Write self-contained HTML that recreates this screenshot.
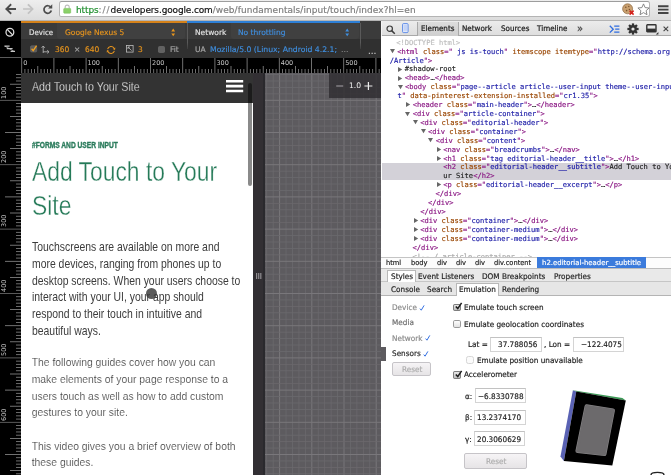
<!DOCTYPE html><html lang="en"><head><meta charset="utf-8"><title>Add Touch to Your Site - DevTools device mode</title><style>
*{margin:0;padding:0;box-sizing:border-box}
html,body{width:671px;height:475px;overflow:hidden;background:#fff}
body{font-family:"DejaVu Sans","Liberation Sans",sans-serif;font-size:7.2px;color:#222;-webkit-font-smoothing:antialiased}
#root{will-change:transform;position:relative;width:671px;height:475px;overflow:hidden;background:#fff}
.abs{position:absolute}
.t{position:absolute;white-space:nowrap;line-height:1;transform-origin:0 50%}
svg{position:absolute;overflow:visible}
/* browser chrome */
#bar{left:0;top:0;width:671px;height:21px;background:linear-gradient(#eeeeee,#dcdcdc);border-bottom:1px solid #b4b4b4}
#omni{left:58.5px;top:1px;width:591.5px;height:16.2px;background:#fff;border:1px solid #b4b4b4;border-top-color:#9d9d9d;border-radius:2.5px}
.url{font-size:8.96px;top:5.9px;-webkit-text-stroke:0.18px currentColor}
/* device mode */
#leftcol{left:0;top:21px;width:21px;height:454px;background:#000}
#dtb{left:21px;top:21px;width:360px;height:37px;background:#303030}
#dtb1{left:0;top:0;width:360px;height:18px;background:#3b3b3b}
#hr{left:21px;top:58px;width:360px;height:15px;background:#000}
.dl{font-size:7.68px;color:#e4e4e4;-webkit-text-stroke:0.15px currentColor;transform:scaleX(.98)}
.or{color:#e8951d}
.bl{color:#3f8fe0}
.gy{color:#a8a8a8}
/* device screen */
#screen{left:21px;top:73px;width:231.5px;height:402px;background:#fff;overflow:hidden}
#phdr{left:0;top:0;width:232px;height:30px;background:#333}
.rc{font-family:"Liberation Sans",sans-serif}
.pg{font-family:"Liberation Sans",sans-serif;color:#3c3c3c;font-size:10.37px;-webkit-text-stroke:0.16px #fff}
#resz{left:252.5px;top:73px;width:12.3px;height:402px;background:linear-gradient(90deg,#322f33 0,#322f33 9.7px,#2a292d 9.9px)}
#grid{left:264.7px;top:73px;width:116.3px;height:402px;background:#5d5b5f;overflow:hidden}
/* devtools */
#dt{left:381px;top:21px;width:290px;height:454px;background:#fff}
#dttb{left:0;top:0;width:290px;height:15px;background:linear-gradient(#ececec,#dedede);border-bottom:1px solid #a9a9a9}
.tab{font-size:7.68px;color:#1a1a1a;-webkit-text-stroke:0.22px currentColor;top:3.5px;transform:scaleX(.935)}
.mono{font-family:"DejaVu Sans Mono","Liberation Mono",monospace;font-size:7.08px;letter-spacing:0;-webkit-text-stroke:0.15px currentColor}
.ln{position:absolute;white-space:pre;line-height:8.91px;height:8.91px}
.tg{color:#881280}.an{color:#994500}.av{color:#1a1aa6}.tx{color:#222}.cm{color:#bdbdbd}
.ui{font-size:7.68px;color:#222;-webkit-text-stroke:0.18px currentColor;transform:scaleX(.95)}
.inp{position:absolute;background:#fff;border:1px solid #d4d4d4;border-top-color:#c2c2c2;height:15px}
.btn{position:absolute;background:linear-gradient(#f6f4f6,#e6e4e6);border:1px solid #c6c4c8;border-radius:2px;height:14.6px}
.cb{position:absolute;width:7.8px;height:7.8px;border:0.9px solid #9a9a9a;border-radius:1.8px;background:linear-gradient(#fdfdfd,#e2e2e2)}
</style></head><body><div id="root">
<div id="bar" class="abs">
<svg style="left:5.2px;top:4.2px" width="11" height="10" viewBox="0 0 12 11"><path d="M6 1 L1.5 5.5 L6 10 M1.8 5.5 H11" fill="none" stroke="#4c4c4c" stroke-width="2.1" stroke-linecap="square" stroke-linejoin="miter"/></svg>
<svg style="left:23.2px;top:4.2px" width="11" height="10" viewBox="0 0 12 11"><path d="M6 1 L10.5 5.5 L6 10 M10.2 5.5 H1" fill="none" stroke="#c2c2c2" stroke-width="1.9" stroke-linecap="square" stroke-linejoin="miter"/></svg>
<svg style="left:41.6px;top:3.6px" width="11" height="11" viewBox="0 0 12 12"><path d="M9.6 3.6 A4.1 4.1 0 1 0 10.2 7.2" fill="none" stroke="#4c4c4c" stroke-width="1.9"/><path d="M6.6 4.8 L11.2 4.8 L11.2 0.2 Z" fill="#4c4c4c"/></svg>
<div id="omni" class="abs"></div>
<svg style="left:63.2px;top:4.3px" width="9" height="10" viewBox="0 0 9 10"><path d="M2.2 4.6 V3.1 A2 2 0 0 1 6.2 3.1 V4.6" fill="none" stroke="#bcbcbc" stroke-width="1.1"/><rect x="0.7" y="4.4" width="7" height="4.8" rx="0.7" fill="#8ad068" stroke="#6cb84c" stroke-width="0.5"/></svg>
<span class="t url" style="left:76px"><span style="color:#1f8f2e;letter-spacing:-0.1px">https</span><span style="color:#8a8a8a;letter-spacing:1px">://</span><span style="color:#111;letter-spacing:-0.12px">developers.google.com</span><span style="color:#7c7c7c;letter-spacing:0.08px">/web/fundamentals/input/touch/index?hl=en</span></span>
<svg style="left:621.5px;top:2.5px" width="13" height="13" viewBox="0 0 13 13"><circle cx="5.6" cy="5.8" r="5" fill="#c9a070" stroke="#8d6a43" stroke-width="0.7"/><circle cx="3.8" cy="4.3" r="0.8" fill="#7a5530"/><circle cx="6.8" cy="3.5" r="0.7" fill="#7a5530"/><circle cx="4.6" cy="7.6" r="0.8" fill="#7a5530"/><circle cx="7.4" cy="6.4" r="0.7" fill="#7a5530"/><path d="M7.6 7.6 L11.6 11.6 M11.6 7.6 L7.6 11.6" stroke="#d4201b" stroke-width="1.5"/></svg>
<svg style="left:636.5px;top:2.5px" width="13" height="13" viewBox="0 0 13 13"><path d="M6.5 0.9 L8.1 4.6 L12.1 5 L9.1 7.7 L10 11.7 L6.5 9.6 L3 11.7 L3.9 7.7 L0.9 5 L4.9 4.6 Z" fill="#fff" stroke="#7c7c7c" stroke-width="0.9" stroke-linejoin="round"/></svg>
<svg style="left:657.5px;top:4.5px" width="11" height="10" viewBox="0 0 11 10"><path d="M0 1.2 H10.5 M0 4.6 H10.5 M0 8 H10.5" stroke="#444" stroke-width="1.9"/></svg>
</div>
<div id="leftcol" class="abs">
<svg style="left:0;top:0" width="21" height="40" viewBox="0 0 21 40"><circle cx="9.9" cy="11.2" r="3.9" fill="none" stroke="#e0e0e0" stroke-width="1.25"/><path d="M7.2 8.4 L12.7 14" stroke="#e0e0e0" stroke-width="1.25"/><path d="M4.4 25.2 H9.6 M6.8 27.7 H12.6 M10.6 30.4 H15" stroke="#c8c8c8" stroke-width="1.3"/><path d="M5 25.2 L14 30.4" stroke="#c8c8c8" stroke-width="0.7"/></svg>
<svg style="left:0;top:0" width="21" height="454" viewBox="0 0 21 454"><rect x="16" y="53.14" width="5" height="0.8" fill="#888"/><rect x="16" y="56.36" width="5" height="0.8" fill="#888"/><rect x="16" y="59.58" width="5" height="0.8" fill="#888"/><rect x="10" y="62.80" width="11" height="0.8" fill="#8e8e8e"/><rect x="16" y="66.02" width="5" height="0.8" fill="#888"/><rect x="16" y="69.24" width="5" height="0.8" fill="#888"/><rect x="16" y="72.46" width="5" height="0.8" fill="#888"/><rect x="16" y="75.68" width="5" height="0.8" fill="#888"/><rect x="0" y="78.90" width="21" height="0.8" fill="#707070"/><rect x="16" y="82.12" width="5" height="0.8" fill="#888"/><rect x="16" y="85.34" width="5" height="0.8" fill="#888"/><rect x="16" y="88.56" width="5" height="0.8" fill="#888"/><rect x="16" y="91.78" width="5" height="0.8" fill="#888"/><rect x="10" y="95.00" width="11" height="0.8" fill="#8e8e8e"/><rect x="16" y="98.22" width="5" height="0.8" fill="#888"/><rect x="16" y="101.44" width="5" height="0.8" fill="#888"/><rect x="16" y="104.66" width="5" height="0.8" fill="#888"/><rect x="16" y="107.88" width="5" height="0.8" fill="#888"/><rect x="5" y="111.10" width="16" height="0.8" fill="#8e8e8e"/><rect x="16" y="114.32" width="5" height="0.8" fill="#888"/><rect x="16" y="117.54" width="5" height="0.8" fill="#888"/><rect x="16" y="120.76" width="5" height="0.8" fill="#888"/><rect x="16" y="123.98" width="5" height="0.8" fill="#888"/><rect x="10" y="127.20" width="11" height="0.8" fill="#8e8e8e"/><rect x="16" y="130.42" width="5" height="0.8" fill="#888"/><rect x="16" y="133.64" width="5" height="0.8" fill="#888"/><rect x="16" y="136.86" width="5" height="0.8" fill="#888"/><rect x="16" y="140.08" width="5" height="0.8" fill="#888"/><rect x="0" y="143.30" width="21" height="0.8" fill="#707070"/><rect x="16" y="146.52" width="5" height="0.8" fill="#888"/><rect x="16" y="149.74" width="5" height="0.8" fill="#888"/><rect x="16" y="152.96" width="5" height="0.8" fill="#888"/><rect x="16" y="156.18" width="5" height="0.8" fill="#888"/><rect x="10" y="159.40" width="11" height="0.8" fill="#8e8e8e"/><rect x="16" y="162.62" width="5" height="0.8" fill="#888"/><rect x="16" y="165.84" width="5" height="0.8" fill="#888"/><rect x="16" y="169.06" width="5" height="0.8" fill="#888"/><rect x="16" y="172.28" width="5" height="0.8" fill="#888"/><rect x="5" y="175.50" width="16" height="0.8" fill="#8e8e8e"/><rect x="16" y="178.72" width="5" height="0.8" fill="#888"/><rect x="16" y="181.94" width="5" height="0.8" fill="#888"/><rect x="16" y="185.16" width="5" height="0.8" fill="#888"/><rect x="16" y="188.38" width="5" height="0.8" fill="#888"/><rect x="10" y="191.60" width="11" height="0.8" fill="#8e8e8e"/><rect x="16" y="194.82" width="5" height="0.8" fill="#888"/><rect x="16" y="198.04" width="5" height="0.8" fill="#888"/><rect x="16" y="201.26" width="5" height="0.8" fill="#888"/><rect x="16" y="204.48" width="5" height="0.8" fill="#888"/><rect x="0" y="207.70" width="21" height="0.8" fill="#707070"/><rect x="16" y="210.92" width="5" height="0.8" fill="#888"/><rect x="16" y="214.14" width="5" height="0.8" fill="#888"/><rect x="16" y="217.36" width="5" height="0.8" fill="#888"/><rect x="16" y="220.58" width="5" height="0.8" fill="#888"/><rect x="10" y="223.80" width="11" height="0.8" fill="#8e8e8e"/><rect x="16" y="227.02" width="5" height="0.8" fill="#888"/><rect x="16" y="230.24" width="5" height="0.8" fill="#888"/><rect x="16" y="233.46" width="5" height="0.8" fill="#888"/><rect x="16" y="236.68" width="5" height="0.8" fill="#888"/><rect x="5" y="239.90" width="16" height="0.8" fill="#8e8e8e"/><rect x="16" y="243.12" width="5" height="0.8" fill="#888"/><rect x="16" y="246.34" width="5" height="0.8" fill="#888"/><rect x="16" y="249.56" width="5" height="0.8" fill="#888"/><rect x="16" y="252.78" width="5" height="0.8" fill="#888"/><rect x="10" y="256.00" width="11" height="0.8" fill="#8e8e8e"/><rect x="16" y="259.22" width="5" height="0.8" fill="#888"/><rect x="16" y="262.44" width="5" height="0.8" fill="#888"/><rect x="16" y="265.66" width="5" height="0.8" fill="#888"/><rect x="16" y="268.88" width="5" height="0.8" fill="#888"/><rect x="0" y="272.10" width="21" height="0.8" fill="#707070"/><rect x="16" y="275.32" width="5" height="0.8" fill="#888"/><rect x="16" y="278.54" width="5" height="0.8" fill="#888"/><rect x="16" y="281.76" width="5" height="0.8" fill="#888"/><rect x="16" y="284.98" width="5" height="0.8" fill="#888"/><rect x="10" y="288.20" width="11" height="0.8" fill="#8e8e8e"/><rect x="16" y="291.42" width="5" height="0.8" fill="#888"/><rect x="16" y="294.64" width="5" height="0.8" fill="#888"/><rect x="16" y="297.86" width="5" height="0.8" fill="#888"/><rect x="16" y="301.08" width="5" height="0.8" fill="#888"/><rect x="5" y="304.30" width="16" height="0.8" fill="#8e8e8e"/><rect x="16" y="307.52" width="5" height="0.8" fill="#888"/><rect x="16" y="310.74" width="5" height="0.8" fill="#888"/><rect x="16" y="313.96" width="5" height="0.8" fill="#888"/><rect x="16" y="317.18" width="5" height="0.8" fill="#888"/><rect x="10" y="320.40" width="11" height="0.8" fill="#8e8e8e"/><rect x="16" y="323.62" width="5" height="0.8" fill="#888"/><rect x="16" y="326.84" width="5" height="0.8" fill="#888"/><rect x="16" y="330.06" width="5" height="0.8" fill="#888"/><rect x="16" y="333.28" width="5" height="0.8" fill="#888"/><rect x="0" y="336.50" width="21" height="0.8" fill="#707070"/><rect x="16" y="339.72" width="5" height="0.8" fill="#888"/><rect x="16" y="342.94" width="5" height="0.8" fill="#888"/><rect x="16" y="346.16" width="5" height="0.8" fill="#888"/><rect x="16" y="349.38" width="5" height="0.8" fill="#888"/><rect x="10" y="352.60" width="11" height="0.8" fill="#8e8e8e"/><rect x="16" y="355.82" width="5" height="0.8" fill="#888"/><rect x="16" y="359.04" width="5" height="0.8" fill="#888"/><rect x="16" y="362.26" width="5" height="0.8" fill="#888"/><rect x="16" y="365.48" width="5" height="0.8" fill="#888"/><rect x="5" y="368.70" width="16" height="0.8" fill="#8e8e8e"/><rect x="16" y="371.92" width="5" height="0.8" fill="#888"/><rect x="16" y="375.14" width="5" height="0.8" fill="#888"/><rect x="16" y="378.36" width="5" height="0.8" fill="#888"/><rect x="16" y="381.58" width="5" height="0.8" fill="#888"/><rect x="10" y="384.80" width="11" height="0.8" fill="#8e8e8e"/><rect x="16" y="388.02" width="5" height="0.8" fill="#888"/><rect x="16" y="391.24" width="5" height="0.8" fill="#888"/><rect x="16" y="394.46" width="5" height="0.8" fill="#888"/><rect x="16" y="397.68" width="5" height="0.8" fill="#888"/><rect x="0" y="400.90" width="21" height="0.8" fill="#707070"/><rect x="16" y="404.12" width="5" height="0.8" fill="#888"/><rect x="16" y="407.34" width="5" height="0.8" fill="#888"/><rect x="16" y="410.56" width="5" height="0.8" fill="#888"/><rect x="16" y="413.78" width="5" height="0.8" fill="#888"/><rect x="10" y="417.00" width="11" height="0.8" fill="#8e8e8e"/><rect x="16" y="420.22" width="5" height="0.8" fill="#888"/><rect x="16" y="423.44" width="5" height="0.8" fill="#888"/><rect x="16" y="426.66" width="5" height="0.8" fill="#888"/><rect x="16" y="429.88" width="5" height="0.8" fill="#888"/><rect x="5" y="433.10" width="16" height="0.8" fill="#8e8e8e"/><rect x="16" y="436.32" width="5" height="0.8" fill="#888"/><rect x="16" y="439.54" width="5" height="0.8" fill="#888"/><rect x="16" y="442.76" width="5" height="0.8" fill="#888"/><rect x="16" y="445.98" width="5" height="0.8" fill="#888"/><rect x="10" y="449.20" width="11" height="0.8" fill="#8e8e8e"/><rect x="16" y="452.42" width="5" height="0.8" fill="#888"/></svg>
<div class="abs" style="left:0;top:36.2px;width:21px;height:0.9px;background:#5a5a5a"></div>
<span class="t" style="left:1.2px;top:77.6px;font-size:6.5px;color:#c6c6c6;transform-origin:0 0;transform:rotate(-90deg) translate(0,0)">100</span>
<span class="t" style="left:1.2px;top:142.0px;font-size:6.5px;color:#c6c6c6;transform-origin:0 0;transform:rotate(-90deg) translate(0,0)">200</span>
<span class="t" style="left:1.2px;top:206.4px;font-size:6.5px;color:#c6c6c6;transform-origin:0 0;transform:rotate(-90deg) translate(0,0)">300</span>
<span class="t" style="left:1.2px;top:270.8px;font-size:6.5px;color:#c6c6c6;transform-origin:0 0;transform:rotate(-90deg) translate(0,0)">400</span>
<span class="t" style="left:1.2px;top:335.2px;font-size:6.5px;color:#c6c6c6;transform-origin:0 0;transform:rotate(-90deg) translate(0,0)">500</span>
<span class="t" style="left:1.2px;top:399.6px;font-size:6.5px;color:#c6c6c6;transform-origin:0 0;transform:rotate(-90deg) translate(0,0)">600</span>
</div>
<div id="dtb" class="abs"><div id="dtb1" class="abs"></div>
<div class="abs" style="left:0;top:0;width:165.5px;height:2px;background:#d5821a"></div>
<div class="abs" style="left:165.5px;top:0;width:173.5px;height:2px;background:#2d7fd6"></div>
<div class="abs" style="left:36px;top:2px;width:128px;height:15.5px;background:#404040;border-radius:0 0 3px 3px"></div>
<div class="abs" style="left:210px;top:2px;width:127.5px;height:15.5px;background:#404040;border-radius:0 0 3px 3px"></div>
<div class="abs" style="left:165.7px;top:2px;width:1px;height:25.5px;background:linear-gradient(#5a5a5a 75%,#3c3c3c)"></div>
<div class="abs" style="left:339.2px;top:2px;width:1px;height:25.5px;background:linear-gradient(#5a5a5a 75%,#3c3c3c)"></div>
<span class="t dl" style="left:7.7px;top:8.1px;transform:scaleX(.92)">Device</span>
<span class="t dl or" style="left:43.7px;top:8.1px">Google Nexus 5</span>
<svg style="left:150px;top:6.5px" width="5" height="9" viewBox="0 0 5 9"><path d="M0.3 3.4 L2.2 0.6 L4.1 3.4 Z M0.3 5.4 L2.2 8.2 L4.1 5.4 Z" fill="#e8951d"/></svg>
<span class="t dl" style="left:173.8px;top:8.1px">Network</span>
<span class="t dl bl" style="left:216.9px;top:8.1px">No throttling</span>
<svg style="left:323.5px;top:6.5px" width="5" height="9" viewBox="0 0 5 9"><path d="M0.3 3.4 L2.2 0.6 L4.1 3.4 Z M0.3 5.4 L2.2 8.2 L4.1 5.4 Z" fill="#3f8fe0"/></svg>
<svg style="left:9px;top:24px" width="8" height="8" viewBox="0 0 8 8"><rect x="0.5" y="0.8" width="6.2" height="6.2" rx="1.2" fill="#5a5a5a" stroke="#777" stroke-width="0.5"/><path d="M1.6 3.8 L3.2 5.6 L6.6 0.6" fill="none" stroke="#f0a020" stroke-width="1.3"/></svg>
<svg style="left:20px;top:23.5px" width="9" height="9" viewBox="0 0 9 9"><path d="M2.2 8 V1.2 M0.6 2.8 L2.2 1 L3.8 2.8 M2.2 6.8 H7.8 M6.2 5.2 L8 6.8 L6.2 8.4" fill="none" stroke="#bdbdbd" stroke-width="0.8"/></svg>
<span class="t dl or" style="left:33.7px;top:25.2px">360</span>
<span class="t dl gy" style="left:53.2px;top:25.2px">×</span>
<span class="t dl or" style="left:63.8px;top:25.2px">640</span>
<svg style="left:84.6px;top:23.6px" width="10" height="10" viewBox="0 0 10 10"><path d="M1.62 4.09 A3.5 3.5 0 0 1 8.03 3.25 M8.38 5.91 A3.5 3.5 0 0 1 1.97 6.75" fill="none" stroke="#e8951d" stroke-width="1.05"/><path d="M9.02 4.96 L9.33 2.50 L6.73 4.00 Z M0.98 5.04 L0.67 7.50 L3.27 6.00 Z" fill="#e8951d"/></svg>
<svg style="left:105px;top:24.2px" width="8" height="8" viewBox="0 0 8 8"><rect x="0.5" y="0.5" width="6.6" height="6.6" fill="none" stroke="#bcbcbc" stroke-width="0.8"/><path d="M2 2 L5.6 5.6 M2 2 H4 M2 2 V4" stroke="#bcbcbc" stroke-width="0.8" fill="none"/></svg>
<span class="t dl or" style="left:117.4px;top:25.2px">3</span>
<div class="abs" style="left:137.2px;top:24.8px;width:7px;height:7px;border-radius:1.8px;background:#626262"></div>
<span class="t dl gy" style="left:148.6px;top:25.2px">Fit</span>
<span class="t dl gy" style="left:173.8px;top:25.2px">UA</span>
<span class="t dl bl" style="left:189.2px;top:25.2px;transform:scaleX(1.004)">Mozilla/5.0 (Linux; Android 4.2.1;</span>
<span class="t dl" style="left:319.5px;top:25.2px;color:#8c8c8c">…</span>
<span class="t dl" style="left:346.6px;top:25.6px;color:#d0d0d0;font-size:8.5px;letter-spacing:0.3px">…</span>
</div>
<div id="hr" class="abs"><svg style="left:0;top:0" width="360" height="15" viewBox="0 0 360 15"><rect x="0.25" y="0" width="0.9" height="15" fill="#7c7c7c"/><rect x="3.52" y="11" width="0.8" height="4" fill="#8a8a8a"/><rect x="6.74" y="11" width="0.8" height="4" fill="#8a8a8a"/><rect x="9.96" y="11" width="0.8" height="4" fill="#8a8a8a"/><rect x="13.18" y="11" width="0.8" height="4" fill="#8a8a8a"/><rect x="16.40" y="8" width="0.8" height="7" fill="#8e8e8e"/><rect x="19.62" y="11" width="0.8" height="4" fill="#8a8a8a"/><rect x="22.84" y="11" width="0.8" height="4" fill="#8a8a8a"/><rect x="26.06" y="11" width="0.8" height="4" fill="#8a8a8a"/><rect x="29.28" y="11" width="0.8" height="4" fill="#8a8a8a"/><rect x="32.45" y="0" width="0.9" height="15" fill="#7c7c7c"/><rect x="35.72" y="11" width="0.8" height="4" fill="#8a8a8a"/><rect x="38.94" y="11" width="0.8" height="4" fill="#8a8a8a"/><rect x="42.16" y="11" width="0.8" height="4" fill="#8a8a8a"/><rect x="45.38" y="11" width="0.8" height="4" fill="#8a8a8a"/><rect x="48.60" y="8" width="0.8" height="7" fill="#8e8e8e"/><rect x="51.82" y="11" width="0.8" height="4" fill="#8a8a8a"/><rect x="55.04" y="11" width="0.8" height="4" fill="#8a8a8a"/><rect x="58.26" y="11" width="0.8" height="4" fill="#8a8a8a"/><rect x="61.48" y="11" width="0.8" height="4" fill="#8a8a8a"/><rect x="64.65" y="0" width="0.9" height="15" fill="#7c7c7c"/><rect x="67.92" y="11" width="0.8" height="4" fill="#8a8a8a"/><rect x="71.14" y="11" width="0.8" height="4" fill="#8a8a8a"/><rect x="74.36" y="11" width="0.8" height="4" fill="#8a8a8a"/><rect x="77.58" y="11" width="0.8" height="4" fill="#8a8a8a"/><rect x="80.80" y="8" width="0.8" height="7" fill="#8e8e8e"/><rect x="84.02" y="11" width="0.8" height="4" fill="#8a8a8a"/><rect x="87.24" y="11" width="0.8" height="4" fill="#8a8a8a"/><rect x="90.46" y="11" width="0.8" height="4" fill="#8a8a8a"/><rect x="93.68" y="11" width="0.8" height="4" fill="#8a8a8a"/><rect x="96.85" y="0" width="0.9" height="15" fill="#7c7c7c"/><rect x="100.12" y="11" width="0.8" height="4" fill="#8a8a8a"/><rect x="103.34" y="11" width="0.8" height="4" fill="#8a8a8a"/><rect x="106.56" y="11" width="0.8" height="4" fill="#8a8a8a"/><rect x="109.78" y="11" width="0.8" height="4" fill="#8a8a8a"/><rect x="113.00" y="8" width="0.8" height="7" fill="#8e8e8e"/><rect x="116.22" y="11" width="0.8" height="4" fill="#8a8a8a"/><rect x="119.44" y="11" width="0.8" height="4" fill="#8a8a8a"/><rect x="122.66" y="11" width="0.8" height="4" fill="#8a8a8a"/><rect x="125.88" y="11" width="0.8" height="4" fill="#8a8a8a"/><rect x="129.05" y="0" width="0.9" height="15" fill="#7c7c7c"/><rect x="132.32" y="11" width="0.8" height="4" fill="#8a8a8a"/><rect x="135.54" y="11" width="0.8" height="4" fill="#8a8a8a"/><rect x="138.76" y="11" width="0.8" height="4" fill="#8a8a8a"/><rect x="141.98" y="11" width="0.8" height="4" fill="#8a8a8a"/><rect x="145.20" y="8" width="0.8" height="7" fill="#8e8e8e"/><rect x="148.42" y="11" width="0.8" height="4" fill="#8a8a8a"/><rect x="151.64" y="11" width="0.8" height="4" fill="#8a8a8a"/><rect x="154.86" y="11" width="0.8" height="4" fill="#8a8a8a"/><rect x="158.08" y="11" width="0.8" height="4" fill="#8a8a8a"/><rect x="161.25" y="0" width="0.9" height="15" fill="#7c7c7c"/><rect x="164.52" y="11" width="0.8" height="4" fill="#8a8a8a"/><rect x="167.74" y="11" width="0.8" height="4" fill="#8a8a8a"/><rect x="170.96" y="11" width="0.8" height="4" fill="#8a8a8a"/><rect x="174.18" y="11" width="0.8" height="4" fill="#8a8a8a"/><rect x="177.40" y="8" width="0.8" height="7" fill="#8e8e8e"/><rect x="180.62" y="11" width="0.8" height="4" fill="#8a8a8a"/><rect x="183.84" y="11" width="0.8" height="4" fill="#8a8a8a"/><rect x="187.06" y="11" width="0.8" height="4" fill="#8a8a8a"/><rect x="190.28" y="11" width="0.8" height="4" fill="#8a8a8a"/><rect x="193.45" y="0" width="0.9" height="15" fill="#7c7c7c"/><rect x="196.72" y="11" width="0.8" height="4" fill="#8a8a8a"/><rect x="199.94" y="11" width="0.8" height="4" fill="#8a8a8a"/><rect x="203.16" y="11" width="0.8" height="4" fill="#8a8a8a"/><rect x="206.38" y="11" width="0.8" height="4" fill="#8a8a8a"/><rect x="209.60" y="8" width="0.8" height="7" fill="#8e8e8e"/><rect x="212.82" y="11" width="0.8" height="4" fill="#8a8a8a"/><rect x="216.04" y="11" width="0.8" height="4" fill="#8a8a8a"/><rect x="219.26" y="11" width="0.8" height="4" fill="#8a8a8a"/><rect x="222.48" y="11" width="0.8" height="4" fill="#8a8a8a"/><rect x="225.65" y="0" width="0.9" height="15" fill="#7c7c7c"/><rect x="228.92" y="11" width="0.8" height="4" fill="#8a8a8a"/><rect x="232.14" y="11" width="0.8" height="4" fill="#8a8a8a"/><rect x="235.36" y="11" width="0.8" height="4" fill="#8a8a8a"/><rect x="238.58" y="11" width="0.8" height="4" fill="#8a8a8a"/><rect x="241.80" y="8" width="0.8" height="7" fill="#8e8e8e"/><rect x="245.02" y="11" width="0.8" height="4" fill="#8a8a8a"/><rect x="248.24" y="11" width="0.8" height="4" fill="#8a8a8a"/><rect x="251.46" y="11" width="0.8" height="4" fill="#8a8a8a"/><rect x="254.68" y="11" width="0.8" height="4" fill="#8a8a8a"/><rect x="257.85" y="0" width="0.9" height="15" fill="#7c7c7c"/><rect x="261.12" y="11" width="0.8" height="4" fill="#8a8a8a"/><rect x="264.34" y="11" width="0.8" height="4" fill="#8a8a8a"/><rect x="267.56" y="11" width="0.8" height="4" fill="#8a8a8a"/><rect x="270.78" y="11" width="0.8" height="4" fill="#8a8a8a"/><rect x="274.00" y="8" width="0.8" height="7" fill="#8e8e8e"/><rect x="277.22" y="11" width="0.8" height="4" fill="#8a8a8a"/><rect x="280.44" y="11" width="0.8" height="4" fill="#8a8a8a"/><rect x="283.66" y="11" width="0.8" height="4" fill="#8a8a8a"/><rect x="286.88" y="11" width="0.8" height="4" fill="#8a8a8a"/><rect x="290.05" y="0" width="0.9" height="15" fill="#7c7c7c"/><rect x="293.32" y="11" width="0.8" height="4" fill="#8a8a8a"/><rect x="296.54" y="11" width="0.8" height="4" fill="#8a8a8a"/><rect x="299.76" y="11" width="0.8" height="4" fill="#8a8a8a"/><rect x="302.98" y="11" width="0.8" height="4" fill="#8a8a8a"/><rect x="306.20" y="8" width="0.8" height="7" fill="#8e8e8e"/><rect x="309.42" y="11" width="0.8" height="4" fill="#8a8a8a"/><rect x="312.64" y="11" width="0.8" height="4" fill="#8a8a8a"/><rect x="315.86" y="11" width="0.8" height="4" fill="#8a8a8a"/><rect x="319.08" y="11" width="0.8" height="4" fill="#8a8a8a"/><rect x="322.25" y="0" width="0.9" height="15" fill="#7c7c7c"/><rect x="325.52" y="11" width="0.8" height="4" fill="#8a8a8a"/><rect x="328.74" y="11" width="0.8" height="4" fill="#8a8a8a"/><rect x="331.96" y="11" width="0.8" height="4" fill="#8a8a8a"/><rect x="335.18" y="11" width="0.8" height="4" fill="#8a8a8a"/><rect x="338.40" y="8" width="0.8" height="7" fill="#8e8e8e"/><rect x="341.62" y="11" width="0.8" height="4" fill="#8a8a8a"/><rect x="344.84" y="11" width="0.8" height="4" fill="#8a8a8a"/><rect x="348.06" y="11" width="0.8" height="4" fill="#8a8a8a"/><rect x="351.28" y="11" width="0.8" height="4" fill="#8a8a8a"/><rect x="354.45" y="0" width="0.9" height="15" fill="#7c7c7c"/><rect x="357.72" y="11" width="0.8" height="4" fill="#8a8a8a"/></svg><span class="t" style="left:2.2px;top:1.8px;font-size:6.5px;color:#c6c6c6">0</span><span class="t" style="left:66.6px;top:1.8px;font-size:6.5px;color:#c6c6c6">100</span><span class="t" style="left:131.0px;top:1.8px;font-size:6.5px;color:#c6c6c6">200</span><span class="t" style="left:195.4px;top:1.8px;font-size:6.5px;color:#c6c6c6">300</span><span class="t" style="left:259.8px;top:1.8px;font-size:6.5px;color:#c6c6c6">400</span><span class="t" style="left:324.2px;top:1.8px;font-size:6.5px;color:#c6c6c6">500</span></div>
<div id="screen" class="abs">
<div id="phdr" class="abs"></div><div class="abs" style="left:1px;top:0;width:231px;height:402px">
<span class="t rc" style="left:9.6px;top:8.2px;font-size:12.4px;color:#f6f6f6;-webkit-text-stroke:0.3px #333;transform:scaleX(0.86)">Add Touch to Your Site</span>
<svg style="left:203.5px;top:6.7px" width="18" height="13" viewBox="0 0 18 13"><path d="M0 1.3 H17.2 M0 6.15 H17.2 M0 11 H17.2" stroke="#fff" stroke-width="2.6"/></svg>
<span class="t rc" style="left:9.6px;top:67.6px;font-size:8.8px;font-weight:bold;color:#2a7b5b;-webkit-text-stroke:0.38px #2a7b5b;transform:scaleX(0.756)">#FORMS AND USER INPUT</span>
<span class="t rc" style="left:9.8px;top:84.7px;font-size:27.6px;color:#257a58;-webkit-text-stroke:0.36px #fff;transform:scaleX(0.828)">Add Touch to Your</span>
<span class="t rc" style="left:9.8px;top:118.5px;font-size:27.6px;color:#257a58;-webkit-text-stroke:0.36px #fff;transform:scaleX(0.828)">Site</span>
<span class="t rc" style="left:9.7px;top:168.10px;font-size:12.4px;color:#3c3c3c;transform:scaleX(0.84)">Touchscreens are available on more and</span>
<span class="t rc" style="left:9.7px;top:185.00px;font-size:12.4px;color:#3c3c3c;transform:scaleX(0.84)">more devices, ranging from phones up to</span>
<span class="t rc" style="left:9.7px;top:201.80px;font-size:12.4px;color:#3c3c3c;transform:scaleX(0.84)">desktop screens. When your users choose to</span>
<span class="t rc" style="left:9.7px;top:218.20px;font-size:12.4px;color:#3c3c3c;transform:scaleX(0.84)">interact with your UI, your app should</span>
<span class="t rc" style="left:9.7px;top:235.00px;font-size:12.4px;color:#3c3c3c;transform:scaleX(0.84)">respond to their touch in intuitive and</span>
<span class="t rc" style="left:9.7px;top:251.80px;font-size:12.4px;color:#3c3c3c;transform:scaleX(0.84)">beautiful ways.</span>
<span class="t pg" style="left:9.7px;top:284.80px">The following guides cover how you can</span>
<span class="t pg" style="left:9.7px;top:301.70px">make elements of your page response to a</span>
<span class="t pg" style="left:9.7px;top:318.60px">users touch as well as how to add custom</span>
<span class="t pg" style="left:9.7px;top:335.00px">gestures to your site.</span>
<span class="t pg" style="left:9.7px;top:368.60px">This video gives you a brief overview of both</span>
<span class="t pg" style="left:9.7px;top:385.00px">these guides.</span>
<div class="abs" style="left:124.2px;top:215.4px;width:11px;height:11px;border-radius:50%;background:rgba(55,55,55,0.82)"></div>
<div class="abs" style="left:225.8px;top:9.5px;width:3.8px;height:103.5px;border-radius:2px;background:rgba(0,0,0,0.46)"></div>
</div></div>
<div id="resz" class="abs"><svg style="left:3.3px;top:199.9px" width="6" height="6" viewBox="0 0 6 6"><path d="M0.6 0 V6 M2.7 0 V6 M4.8 0 V6" stroke="#8f8d91" stroke-width="1.2"/></svg></div>
<div id="grid" class="abs"><svg style="left:0;top:0" width="119" height="402" viewBox="0 0 119 402"><rect x="1.32" y="0" width="0.8" height="402" fill="#6b696d"/><rect x="7.76" y="0" width="0.8" height="402" fill="#6b696d"/><rect x="14.10" y="0" width="1" height="402" fill="#79777b"/><rect x="20.64" y="0" width="0.8" height="402" fill="#6b696d"/><rect x="27.08" y="0" width="0.8" height="402" fill="#6b696d"/><rect x="33.52" y="0" width="0.8" height="402" fill="#6b696d"/><rect x="39.96" y="0" width="0.8" height="402" fill="#6b696d"/><rect x="46.30" y="0" width="1" height="402" fill="#79777b"/><rect x="52.84" y="0" width="0.8" height="402" fill="#6b696d"/><rect x="59.28" y="0" width="0.8" height="402" fill="#6b696d"/><rect x="65.72" y="0" width="0.8" height="402" fill="#6b696d"/><rect x="72.16" y="0" width="0.8" height="402" fill="#6b696d"/><rect x="78.50" y="0" width="1" height="402" fill="#79777b"/><rect x="85.04" y="0" width="0.8" height="402" fill="#6b696d"/><rect x="91.48" y="0" width="0.8" height="402" fill="#6b696d"/><rect x="97.92" y="0" width="0.8" height="402" fill="#6b696d"/><rect x="104.36" y="0" width="0.8" height="402" fill="#6b696d"/><rect x="110.70" y="0" width="1" height="402" fill="#79777b"/><rect x="117.24" y="0" width="0.8" height="402" fill="#6b696d"/><rect x="0" y="1.14" width="119" height="0.8" fill="#6b696d"/><rect x="0" y="7.58" width="119" height="0.8" fill="#6b696d"/><rect x="0" y="14.02" width="119" height="0.8" fill="#6b696d"/><rect x="0" y="20.46" width="119" height="0.8" fill="#6b696d"/><rect x="0" y="26.80" width="119" height="1" fill="#79777b"/><rect x="0" y="33.34" width="119" height="0.8" fill="#6b696d"/><rect x="0" y="39.78" width="119" height="0.8" fill="#6b696d"/><rect x="0" y="46.22" width="119" height="0.8" fill="#6b696d"/><rect x="0" y="52.66" width="119" height="0.8" fill="#6b696d"/><rect x="0" y="59.00" width="119" height="1" fill="#79777b"/><rect x="0" y="65.54" width="119" height="0.8" fill="#6b696d"/><rect x="0" y="71.98" width="119" height="0.8" fill="#6b696d"/><rect x="0" y="78.42" width="119" height="0.8" fill="#6b696d"/><rect x="0" y="84.86" width="119" height="0.8" fill="#6b696d"/><rect x="0" y="91.20" width="119" height="1" fill="#79777b"/><rect x="0" y="97.74" width="119" height="0.8" fill="#6b696d"/><rect x="0" y="104.18" width="119" height="0.8" fill="#6b696d"/><rect x="0" y="110.62" width="119" height="0.8" fill="#6b696d"/><rect x="0" y="117.06" width="119" height="0.8" fill="#6b696d"/><rect x="0" y="123.40" width="119" height="1" fill="#79777b"/><rect x="0" y="129.94" width="119" height="0.8" fill="#6b696d"/><rect x="0" y="136.38" width="119" height="0.8" fill="#6b696d"/><rect x="0" y="142.82" width="119" height="0.8" fill="#6b696d"/><rect x="0" y="149.26" width="119" height="0.8" fill="#6b696d"/><rect x="0" y="155.60" width="119" height="1" fill="#79777b"/><rect x="0" y="162.14" width="119" height="0.8" fill="#6b696d"/><rect x="0" y="168.58" width="119" height="0.8" fill="#6b696d"/><rect x="0" y="175.02" width="119" height="0.8" fill="#6b696d"/><rect x="0" y="181.46" width="119" height="0.8" fill="#6b696d"/><rect x="0" y="187.80" width="119" height="1" fill="#79777b"/><rect x="0" y="194.34" width="119" height="0.8" fill="#6b696d"/><rect x="0" y="200.78" width="119" height="0.8" fill="#6b696d"/><rect x="0" y="207.22" width="119" height="0.8" fill="#6b696d"/><rect x="0" y="213.66" width="119" height="0.8" fill="#6b696d"/><rect x="0" y="220.00" width="119" height="1" fill="#79777b"/><rect x="0" y="226.54" width="119" height="0.8" fill="#6b696d"/><rect x="0" y="232.98" width="119" height="0.8" fill="#6b696d"/><rect x="0" y="239.42" width="119" height="0.8" fill="#6b696d"/><rect x="0" y="245.86" width="119" height="0.8" fill="#6b696d"/><rect x="0" y="252.20" width="119" height="1" fill="#79777b"/><rect x="0" y="258.74" width="119" height="0.8" fill="#6b696d"/><rect x="0" y="265.18" width="119" height="0.8" fill="#6b696d"/><rect x="0" y="271.62" width="119" height="0.8" fill="#6b696d"/><rect x="0" y="278.06" width="119" height="0.8" fill="#6b696d"/><rect x="0" y="284.40" width="119" height="1" fill="#79777b"/><rect x="0" y="290.94" width="119" height="0.8" fill="#6b696d"/><rect x="0" y="297.38" width="119" height="0.8" fill="#6b696d"/><rect x="0" y="303.82" width="119" height="0.8" fill="#6b696d"/><rect x="0" y="310.26" width="119" height="0.8" fill="#6b696d"/><rect x="0" y="316.60" width="119" height="1" fill="#79777b"/><rect x="0" y="323.14" width="119" height="0.8" fill="#6b696d"/><rect x="0" y="329.58" width="119" height="0.8" fill="#6b696d"/><rect x="0" y="336.02" width="119" height="0.8" fill="#6b696d"/><rect x="0" y="342.46" width="119" height="0.8" fill="#6b696d"/><rect x="0" y="348.80" width="119" height="1" fill="#79777b"/><rect x="0" y="355.34" width="119" height="0.8" fill="#6b696d"/><rect x="0" y="361.78" width="119" height="0.8" fill="#6b696d"/><rect x="0" y="368.22" width="119" height="0.8" fill="#6b696d"/><rect x="0" y="374.66" width="119" height="0.8" fill="#6b696d"/><rect x="0" y="381.00" width="119" height="1" fill="#79777b"/><rect x="0" y="387.54" width="119" height="0.8" fill="#6b696d"/><rect x="0" y="393.98" width="119" height="0.8" fill="#6b696d"/><rect x="0" y="400.42" width="119" height="0.8" fill="#6b696d"/></svg><div class="abs" style="left:64.7px;top:0;width:52px;height:24.6px;background:rgba(46,44,48,0.8)"></div><svg style="left:71.7px;top:7.5px" width="40" height="10" viewBox="0 0 40 10"><path d="M0.2 5 H7.2" stroke="#959397" stroke-width="1.2"/><path d="M28.4 5 H36.4 M32.4 1 V9" stroke="#ececec" stroke-width="1.2"/></svg><span class="t" style="left:84.3px;top:8.6px;font-size:7.6px;color:#f0f0f0">1.0</span></div>
<div id="dt" class="abs">
<div id="dttb" class="abs"></div>
<svg style="left:4.9px;top:3.6px" width="10" height="10" viewBox="0 0 10 10"><circle cx="3.7" cy="3.7" r="2.7" fill="none" stroke="#3c3c3c" stroke-width="1.2"/><path d="M5.6 5.6 L8.8 8.8" stroke="#3c3c3c" stroke-width="1.5"/></svg>
<svg style="left:21.4px;top:2.1px" width="7.4" height="10.2" viewBox="0 0 8 11"><rect x="0.6" y="0.6" width="6" height="9.8" rx="1.1" fill="#dfe8fb" stroke="#4b7fe6" stroke-width="0.9"/><rect x="1.8" y="2" width="3.6" height="6.4" fill="#c4d4f6"/></svg>
<div class="abs" style="left:36px;top:1px;width:41.5px;height:13.5px;background:linear-gradient(#dcdcdc,#cfcfcf);border-left:1px solid #a8a8a8;border-right:1px solid #a8a8a8"></div>
<span class="t tab" style="left:40.2px">Elements</span>
<span class="t tab" style="left:81.2px">Network</span>
<span class="t tab" style="left:119.7px">Sources</span>
<span class="t tab" style="left:155.7px">Timeline</span>
<span class="t tab" style="left:195.6px;top:1.9px;font-size:10.5px;color:#444">»</span>
<svg style="left:228px;top:3.6px" width="11" height="9" viewBox="0 0 11 9"><path d="M0.8 0.8 L4.2 4.2 L0.8 7.6" fill="none" stroke="#2f6de0" stroke-width="1.3"/><path d="M5.2 1.2 H10.4 M6.2 4.2 H10.4 M5.2 7.2 H10.4" stroke="#2f6de0" stroke-width="1.2"/></svg>
<svg style="left:246px;top:2.4px" width="12" height="12" viewBox="-6 -6 12 12"><g fill="#333"><rect x="-1.15" y="-5.6" width="2.3" height="3" transform="rotate(0)"/><rect x="-1.15" y="-5.6" width="2.3" height="3" transform="rotate(45)"/><rect x="-1.15" y="-5.6" width="2.3" height="3" transform="rotate(90)"/><rect x="-1.15" y="-5.6" width="2.3" height="3" transform="rotate(135)"/><rect x="-1.15" y="-5.6" width="2.3" height="3" transform="rotate(180)"/><rect x="-1.15" y="-5.6" width="2.3" height="3" transform="rotate(225)"/><rect x="-1.15" y="-5.6" width="2.3" height="3" transform="rotate(270)"/><rect x="-1.15" y="-5.6" width="2.3" height="3" transform="rotate(315)"/><circle r="3.9"/></g><circle r="1.6" fill="#e4e4e4"/></svg>
<svg style="left:265px;top:3.4px" width="13" height="11" viewBox="0 0 13 11"><rect x="0.8" y="0.8" width="9.2" height="7" rx="0.6" fill="#e8e8e8" stroke="#333" stroke-width="1.4"/><rect x="1" y="4.6" width="8.8" height="3" fill="#333"/><path d="M12.4 8 V10.6 H9.8 Z" fill="#333"/></svg>
<svg style="left:282px;top:5px" width="6" height="6" viewBox="0 0 6 6"><path d="M0.6 0.6 L5.2 5.2 M5.2 0.6 L0.6 5.2" stroke="#444" stroke-width="1.1"/></svg>
<div class="abs mono" style="left:0;top:15.00px;width:290px;height:220.60px;overflow:hidden">
<div class="abs" style="left:1px;top:127.30px;width:289px;height:16.60px;background:#d3d1d8"></div>
<div class="ln" style="left:15.30px;top:2.75px"><span class="cm">&lt;!DOCTYPE html&gt;</span></div>
<svg style="left:8.80px;top:13.21px" width="5" height="4.2" viewBox="0 0 5 4.2"><path d="M0 0 H5 L2.5 4.2 Z" fill="#666"/></svg>
<div class="ln" style="left:16.30px;top:11.66px"><span class="tg">&lt;html</span> <span class="an">class</span><span class="tg">="</span><span class="av"> js is-touch</span><span class="tg">"</span> <span class="an">itemscope</span> <span class="an">itemtype</span><span class="tg">="</span><span class="av">http://schema.org</span></div>
<div class="ln" style="left:8.70px;top:20.57px"><span class="av">/Article</span><span class="tg">&quot;&gt;</span></div>
<svg style="left:17.10px;top:30.63px" width="4.2" height="5" viewBox="0 0 4.2 5"><path d="M0 0 V5 L4.2 2.5 Z" fill="#666"/></svg>
<div class="ln" style="left:23.80px;top:29.48px"><span class="tx">#shadow-root</span></div>
<svg style="left:17.10px;top:39.54px" width="4.2" height="5" viewBox="0 0 4.2 5"><path d="M0 0 V5 L4.2 2.5 Z" fill="#666"/></svg>
<div class="ln" style="left:23.80px;top:38.39px"><span class="tg">&lt;head&gt;</span><span class="tx">…</span><span class="tg">&lt;/head&gt;</span></div>
<svg style="left:16.50px;top:48.85px" width="5" height="4.2" viewBox="0 0 5 4.2"><path d="M0 0 H5 L2.5 4.2 Z" fill="#666"/></svg>
<div class="ln" style="left:24.00px;top:47.30px"><span class="tg">&lt;body</span> <span class="an">class</span><span class="tg">="</span><span class="av">page--article article--user-input theme--user-inpu</span></div>
<div class="ln" style="left:16.40px;top:56.21px"><span class="av">t</span><span class="tg">&quot;</span> <span class="an">data-pinterest-extension-installed</span><span class="tg">="</span><span class="av">cr1.35</span><span class="tg">"</span><span class="tg">&gt;</span></div>
<svg style="left:25.00px;top:66.27px" width="4.2" height="5" viewBox="0 0 4.2 5"><path d="M0 0 V5 L4.2 2.5 Z" fill="#666"/></svg>
<div class="ln" style="left:31.70px;top:65.12px"><span class="tg">&lt;header</span> <span class="an">class</span><span class="tg">="</span><span class="av">main-header</span><span class="tg">"</span><span class="tg">&gt;</span><span class="tx">…</span><span class="tg">&lt;/header&gt;</span></div>
<svg style="left:24.20px;top:75.58px" width="5" height="4.2" viewBox="0 0 5 4.2"><path d="M0 0 H5 L2.5 4.2 Z" fill="#666"/></svg>
<div class="ln" style="left:31.70px;top:74.03px"><span class="tg">&lt;div</span> <span class="an">class</span><span class="tg">="</span><span class="av">article-container</span><span class="tg">"</span><span class="tg">&gt;</span></div>
<svg style="left:31.80px;top:84.49px" width="5" height="4.2" viewBox="0 0 5 4.2"><path d="M0 0 H5 L2.5 4.2 Z" fill="#666"/></svg>
<div class="ln" style="left:39.30px;top:82.94px"><span class="tg">&lt;div</span> <span class="an">class</span><span class="tg">="</span><span class="av">editorial-header</span><span class="tg">"</span><span class="tg">&gt;</span></div>
<svg style="left:39.50px;top:93.40px" width="5" height="4.2" viewBox="0 0 5 4.2"><path d="M0 0 H5 L2.5 4.2 Z" fill="#666"/></svg>
<div class="ln" style="left:47.00px;top:91.84px"><span class="tg">&lt;div</span> <span class="an">class</span><span class="tg">="</span><span class="av">container</span><span class="tg">"</span><span class="tg">&gt;</span></div>
<svg style="left:47.20px;top:102.31px" width="5" height="4.2" viewBox="0 0 5 4.2"><path d="M0 0 H5 L2.5 4.2 Z" fill="#666"/></svg>
<div class="ln" style="left:54.70px;top:100.75px"><span class="tg">&lt;div</span> <span class="an">class</span><span class="tg">="</span><span class="av">content</span><span class="tg">"</span><span class="tg">&gt;</span></div>
<svg style="left:55.60px;top:110.82px" width="4.2" height="5" viewBox="0 0 4.2 5"><path d="M0 0 V5 L4.2 2.5 Z" fill="#666"/></svg>
<div class="ln" style="left:62.30px;top:109.67px"><span class="tg">&lt;nav</span> <span class="an">class</span><span class="tg">="</span><span class="av">breadcrumbs</span><span class="tg">"</span><span class="tg">&gt;</span><span class="tx">…</span><span class="tg">&lt;/nav&gt;</span></div>
<svg style="left:55.60px;top:119.73px" width="4.2" height="5" viewBox="0 0 4.2 5"><path d="M0 0 V5 L4.2 2.5 Z" fill="#666"/></svg>
<div class="ln" style="left:62.30px;top:118.57px"><span class="tg">&lt;h1</span> <span class="an">class</span><span class="tg">="</span><span class="av">tag editorial-header__title</span><span class="tg">"</span><span class="tg">&gt;</span><span class="tx">…</span><span class="tg">&lt;/h1&gt;</span></div>
<div class="ln" style="left:62.30px;top:127.49px"><span class="tg">&lt;h2</span> <span class="an">class</span><span class="tg">="</span><span class="av">editorial-header__subtitle</span><span class="tg">"</span><span class="tg">&gt;</span><span class="tx">Add Touch to Yo</span></div>
<div class="ln" style="left:62.30px;top:136.40px"><span class="tx">ur Site</span><span class="tg">&lt;/h2&gt;</span></div>
<svg style="left:55.60px;top:146.46px" width="4.2" height="5" viewBox="0 0 4.2 5"><path d="M0 0 V5 L4.2 2.5 Z" fill="#666"/></svg>
<div class="ln" style="left:62.30px;top:145.31px"><span class="tg">&lt;p</span> <span class="an">class</span><span class="tg">="</span><span class="av">editorial-header__excerpt</span><span class="tg">"</span><span class="tg">&gt;</span><span class="tx">…</span><span class="tg">&lt;/p&gt;</span></div>
<div class="ln" style="left:54.60px;top:154.22px"><span class="tg">&lt;/div&gt;</span></div>
<div class="ln" style="left:46.90px;top:163.12px"><span class="tg">&lt;/div&gt;</span></div>
<div class="ln" style="left:39.20px;top:172.03px"><span class="tg">&lt;/div&gt;</span></div>
<svg style="left:32.60px;top:182.10px" width="4.2" height="5" viewBox="0 0 4.2 5"><path d="M0 0 V5 L4.2 2.5 Z" fill="#666"/></svg>
<div class="ln" style="left:39.30px;top:180.94px"><span class="tg">&lt;div</span> <span class="an">class</span><span class="tg">="</span><span class="av">container</span><span class="tg">"</span><span class="tg">&gt;</span><span class="tx">…</span><span class="tg">&lt;/div&gt;</span></div>
<svg style="left:32.60px;top:191.01px" width="4.2" height="5" viewBox="0 0 4.2 5"><path d="M0 0 V5 L4.2 2.5 Z" fill="#666"/></svg>
<div class="ln" style="left:39.30px;top:189.86px"><span class="tg">&lt;div</span> <span class="an">class</span><span class="tg">="</span><span class="av">container-medium</span><span class="tg">"</span><span class="tg">&gt;</span><span class="tx">…</span><span class="tg">&lt;/div&gt;</span></div>
<svg style="left:32.60px;top:199.92px" width="4.2" height="5" viewBox="0 0 4.2 5"><path d="M0 0 V5 L4.2 2.5 Z" fill="#666"/></svg>
<div class="ln" style="left:39.30px;top:198.77px"><span class="tg">&lt;div</span> <span class="an">class</span><span class="tg">="</span><span class="av">container-medium</span><span class="tg">"</span><span class="tg">&gt;</span><span class="tx">…</span><span class="tg">&lt;/div&gt;</span></div>
<div class="ln" style="left:31.60px;top:207.68px"><span class="tg">&lt;/div&gt;</span></div>
<div class="ln" style="left:31.60px;top:216.59px"><span style="color:#aaa;position:relative;top:0.7px">&lt;!-- /.article-container --&gt;</span></div>
</div>
<div class="abs" style="left:0;top:235.50px;width:290px;height:11.9px;background:#fcfcfc;border-top:1px solid #c4c4c4"></div>
<span class="t ui" style="left:4.9px;top:237.70px;font-size:7.04px">html</span>
<span class="t ui" style="left:29.9px;top:237.70px;font-size:7.04px">body</span>
<span class="t ui" style="left:55.8px;top:237.70px;font-size:7.04px">div</span>
<span class="t ui" style="left:75.2px;top:237.70px;font-size:7.04px">div</span>
<span class="t ui" style="left:94.0px;top:237.70px;font-size:7.04px">div</span>
<span class="t ui" style="left:113.3px;top:237.70px;font-size:7.04px">div.content</span>
<div class="abs" style="left:155.9px;top:235.90px;width:108.7px;height:11.5px;background:#3b7bdc"></div>
<span class="t ui" style="left:160.8px;top:237.70px;font-size:7.04px;color:#fff;transform:scaleX(.984)">h2.editorial-header__subtitle</span>
<div class="abs" style="left:0;top:247.30px;width:290px;height:13.3px;background:#e9e9e9;border-top:1px solid #bdbdbd;border-bottom:1px solid #c6c6c6"></div>
<div class="abs" style="left:6.4px;top:249.20px;width:28.2px;height:11.6px;background:#fff;border:1px solid #b8b8b8;border-bottom:none"></div>
<span class="t ui" style="left:9.9px;top:252.00px">Styles</span>
<span class="t ui" style="left:37.4px;top:252.00px">Event Listeners</span>
<span class="t ui" style="left:100.9px;top:252.00px">DOM Breakpoints</span>
<span class="t ui" style="left:172.5px;top:252.00px">Properties</span>
<div class="abs" style="left:0;top:260.50px;width:290px;height:14.1px;background:#e6e6e6;border-bottom:1px solid #b4b4b4"></div>
<div class="abs" style="left:74.5px;top:261.60px;width:43.6px;height:13.2px;background:#fff;border:1px solid #b8b8b8;border-bottom:none"></div>
<span class="t ui" style="left:10.0px;top:265.00px">Console</span>
<span class="t ui" style="left:46.4px;top:265.00px">Search</span>
<span class="t ui" style="left:77.9px;top:265.00px">Emulation</span>
<span class="t ui" style="left:121.2px;top:265.00px">Rendering</span>
<span class="t ui" style="left:11.0px;top:283.20px;color:#8a8a8a">Device<svg style="position:static;display:inline-block;vertical-align:-0.5px;margin-left:2.6px" width="5.2" height="6" viewBox="0 0 5.2 6"><path d="M0.4 3.6 L1.8 5.2 L4.8 0.4" fill="none" stroke="#2f6de0" stroke-width="1"/></svg></span>
<span class="t ui" style="left:11.0px;top:298.20px;color:#6e6e6e">Media</span>
<span class="t ui" style="left:11.0px;top:313.90px;color:#8a8a8a">Network<svg style="position:static;display:inline-block;vertical-align:-0.5px;margin-left:2.6px" width="5.2" height="6" viewBox="0 0 5.2 6"><path d="M0.4 3.6 L1.8 5.2 L4.8 0.4" fill="none" stroke="#2f6de0" stroke-width="1"/></svg></span>
<span class="t ui" style="left:11.0px;top:329.30px;color:#2a2a2a">Sensors<svg style="position:static;display:inline-block;vertical-align:-0.5px;margin-left:2.6px" width="5.2" height="6" viewBox="0 0 5.2 6"><path d="M0.4 3.6 L1.8 5.2 L4.8 0.4" fill="none" stroke="#2f6de0" stroke-width="1"/></svg></span>
<div class="btn" style="left:11.0px;top:340.70px;width:38.6px"></div>
<span class="t ui" style="left:21.0px;top:344.80px;color:#adadad">Reset</span>
<div class="cb" style="left:72.4px;top:282.70px;"></div>
<div class="cb" style="left:72.4px;top:282.70px;border-color:#7e7e7e;background:linear-gradient(#e9e9e9,#bfbfbf)"></div>
<svg style="left:73.6px;top:281.40px" width="8" height="8" viewBox="0 0 8 8"><path d="M0.8 4.4 L2.8 6.6 L6.6 0.8" fill="none" stroke="#1c1c1c" stroke-width="1.5"/></svg>
<span class="t ui" style="left:82.8px;top:283.20px">Emulate touch screen</span>
<div class="cb" style="left:72.4px;top:298.90px;"></div>
<span class="t ui" style="left:82.8px;top:300.00px">Emulate geolocation coordinates</span>
<span class="t ui" style="left:86.6px;top:320.30px">Lat =</span>
<div class="inp" style="left:108.5px;top:316.20px;width:52px"></div>
<span class="t ui" style="left:116.6px;top:320.30px">37.788056</span>
<span class="t ui" style="left:162.6px;top:320.30px">, Lon =</span>
<div class="inp" style="left:191.9px;top:316.20px;width:51.2px"></div>
<span class="t ui" style="left:200.2px;top:320.30px">−122.4075</span>
<div class="cb" style="left:85.2px;top:335.10px;border-color:#d6d6d6;background:#fbfbfb;border-radius:2.4px;"></div>
<span class="t ui" style="left:95.6px;top:335.90px">Emulate position unavailable</span>
<div class="cb" style="left:72.4px;top:350.40px;"></div>
<div class="cb" style="left:72.4px;top:350.40px;border-color:#7e7e7e;background:linear-gradient(#e9e9e9,#bfbfbf)"></div>
<svg style="left:73.6px;top:349.10px" width="8" height="8" viewBox="0 0 8 8"><path d="M0.8 4.4 L2.8 6.6 L6.6 0.8" fill="none" stroke="#1c1c1c" stroke-width="1.5"/></svg>
<span class="t ui" style="left:82.6px;top:350.10px">Accelerometer</span>
<span class="t ui" style="left:84.0px;top:371.50px">α:</span>
<div class="inp" style="left:93.9px;top:366.80px;width:51.6px"></div>
<span class="t ui" style="left:96.7px;top:371.50px">−6.8330788</span>
<span class="t ui" style="left:84.0px;top:393.00px">β:</span>
<div class="inp" style="left:93.3px;top:388.60px;width:51.6px"></div>
<span class="t ui" style="left:96.1px;top:393.00px">13.2374170</span>
<span class="t ui" style="left:84.0px;top:415.00px">γ:</span>
<div class="inp" style="left:92.7px;top:410.40px;width:51.6px"></div>
<span class="t ui" style="left:95.5px;top:415.00px">20.3060629</span>
<div class="btn" style="left:83.4px;top:432.20px;width:62.2px;height:15.7px"></div>
<span class="t ui" style="left:105.2px;top:436.80px;color:#adadad">Reset</span>
<svg style="left:0;top:0" width="290" height="454" viewBox="0 0 290 454">
<polygon points="191.9,369.3 179.5,435.6 182.9,440.1 195.3,370.4" fill="#5a62b4"/>
<polygon points="191.9,369.3 195.3,370.4 244.8,379.4 241.4,377.1" fill="#3a9a55"/>
<polygon points="195.3,370.4 244.8,379.4 231.3,444.6 182.9,440.1" fill="#000"/>
<polygon points="205.5,385.3 232.0,389.4 223.5,433.1 196.4,430.0" fill="#858385" stroke="#858385" stroke-width="3.9" stroke-linejoin="round"/>
<polygon points="205.5,385.3 232.0,389.4 223.5,433.1 196.4,430.0" fill="#6c6a6c" stroke="#6c6a6c" stroke-width="2.6" stroke-linejoin="round"/>
<path d="M270 454 A6.5 2.6 0 0 1 283 454" fill="none" stroke="#222" stroke-width="1.4"/>
</svg>
<div class="abs" style="left:0;top:0;width:1px;height:15px;background:#f4f4f4"></div>
<div class="abs" style="left:-0.3px;top:326.2px;width:5.1px;height:13.5px;background:#5d5b5f"></div>
</div>
</div></body></html>
